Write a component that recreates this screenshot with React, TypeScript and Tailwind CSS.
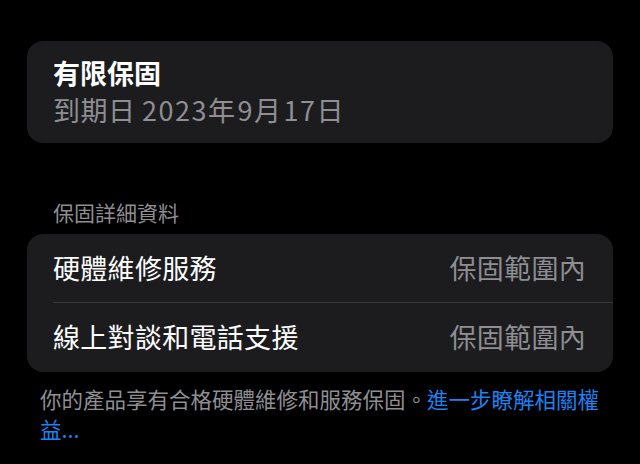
import React from "react";

const font = { fontFamily: '"Noto Sans CJK TC", "Noto Sans", sans-serif' };

export default function App() {
  return (
    <div className="w-[640px] h-[464px] bg-black overflow-hidden" style={font}>
      <div className="px-[27px] pt-[41px]">
        <div className="bg-[#1c1c1e] rounded-[16px] h-[102px] pl-[26px] pt-[13px]">
          <div className="text-[27px] leading-[37px] font-semibold text-white">有限保固</div>
          <div className="text-[27px] leading-[37px] text-[#8e8e93] tracking-[0.5px]">
            到期日 <span className="tracking-[1.5px]">2023</span>年<span className="tracking-[1.5px] pl-[2px]">9</span>月<span className="tracking-[1.5px] pl-[2px]">17</span>日
          </div>
        </div>
        <div className="pl-[26px] pt-[55px] text-[21px] leading-[28px] text-[#8e8e93]">保固詳細資料</div>
        <div className="mt-[8px] bg-[#1c1c1e] rounded-[16px] pl-[26px]">
          <div className="h-[69px] flex items-center justify-between pr-[27px] border-b border-[#38383a]">
            <span className="text-[27px] tracking-[0.3px] text-white">硬體維修服務</span>
            <span className="text-[27px] tracking-[0.3px] text-[#8e8e93]">保固範圍內</span>
          </div>
          <div className="h-[69px] flex items-center justify-between pr-[27px]">
            <span className="text-[27px] tracking-[0.3px] text-white">線上對談和電話支援</span>
            <span className="text-[27px] tracking-[0.3px] text-[#8e8e93]">保固範圍內</span>
          </div>
        </div>
      </div>
      <p className="pl-[40px] pr-[38px] pt-[12px] text-[21.5px] leading-[30px] text-[#8e8e93]">
        你的產品享有合格硬體維修和服務保固。<span className="text-[#1e82f0]">進一步瞭解相關權益...</span>
      </p>
    </div>
  );
}
